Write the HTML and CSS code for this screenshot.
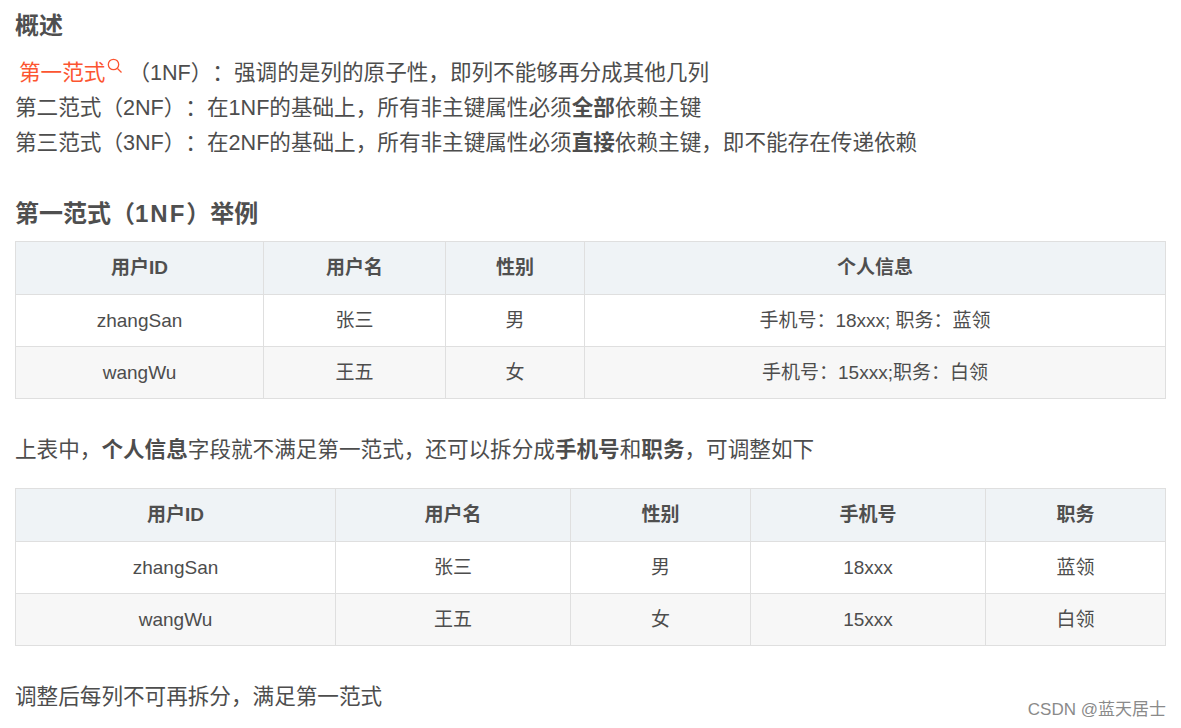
FILE: index.html
```html
<!DOCTYPE html>
<html lang="zh">
<head>
<meta charset="utf-8">
<title>第一范式</title>
<link rel="stylesheet" href="styles.css">
</head>
<body>
<main class="article">
<h3 class="heading first">概述</h3>
<p class="para"><a class="term">第一范式<svg class="search" width="18" height="18" viewBox="0 0 18 18"><circle cx="7.5" cy="6.5" r="5.2" fill="none" stroke="#fc5531" stroke-width="1.3"/><path d="M11.5 10.5l4 4" stroke="#fc5531" stroke-width="1.3" fill="none"/></svg></a><span class="after-term">（1NF）：</span>强调的是列的原子性，即列不能够再分成其他几列<br>第二范式（2NF）：在1NF的基础上，所有非主键属性必须<strong>全部</strong>依赖主键<br>第三范式（3NF）：在2NF的基础上，所有非主键属性必须<strong>直接</strong>依赖主键，即不能存在传递依赖</p>
<h3 class="heading">第一范式（<span class="wide">1NF</span>）举例</h3>
<table class="grid one">
<thead><tr><th>用户ID</th><th>用户名</th><th>性别</th><th>个人信息</th></tr></thead>
<tbody>
<tr><td>zhangSan</td><td>张三</td><td>男</td><td>手机号：18xxx; 职务：蓝领</td></tr>
<tr><td>wangWu</td><td>王五</td><td>女</td><td>手机号：15xxx;职务：白领</td></tr>
</tbody>
</table>
<p class="para gap">上表中，<strong>个人信息</strong>字段就不满足第一范式，还可以拆分成<strong>手机号</strong>和<strong>职务</strong>，可调整如下</p>
<table class="grid two">
<thead><tr><th>用户ID</th><th>用户名</th><th>性别</th><th>手机号</th><th>职务</th></tr></thead>
<tbody>
<tr><td>zhangSan</td><td>张三</td><td>男</td><td>18xxx</td><td>蓝领</td></tr>
<tr><td>wangWu</td><td>王五</td><td>女</td><td>15xxx</td><td>白领</td></tr>
</tbody>
</table>
<p class="para gap">调整后每列不可再拆分，满足第一范式</p>
</main>
<div class="mark">CSDN @蓝天居士</div>
</body>
</html>
```
FILE: styles.css
```css
html, body { margin: 0; padding: 0; background: #fff; height: 728px; overflow: hidden; }
body { font-family: "Liberation Sans", "Noto Sans CJK SC", sans-serif; color: #4d4d4d; position: relative; text-spacing-trim: space-all; }
.article { padding: 0 15px; }
.heading { margin: 0; font-size: 24px; line-height: 30px; font-weight: 700; color: #4f4f4f; padding-top: 39px; padding-bottom: 12px; }
.heading.first { padding-top: 11px; padding-bottom: 14px; }
.wide { letter-spacing: 2px; }
.para { margin: 0; font-size: 21.6px; line-height: 35px; color: #4d4d4d; }
.para strong { font-weight: 700; }
.term { color: #fc5531; padding-left: 4px; }
.search { vertical-align: 4px; margin-left: 1px; }
.after-term { margin-left: 4px; }
.gap { margin-top: 33px; }
.grid { border-collapse: collapse; width: 1151px; table-layout: fixed; font-size: 19px; line-height: 24px; }
.grid th, .grid td { border: 1px solid #dfdfdf; text-align: center; height: 52px; padding: 0; box-sizing: border-box; }
.grid th { background: #eff3f6; font-weight: 700; color: #4f4f4f; height: 53px; }
.grid tbody tr:nth-child(2) td { background: #f7f7f7; }
.two { margin-top: 21px; }
.mark { position: absolute; right: 15px; top: 699px; font-size: 17px; line-height: 22px; color: #8a8a8a; }
.one th:nth-child(1) { width: 248px; }
.one th:nth-child(2) { width: 182px; }
.one th:nth-child(3) { width: 139px; }
.two th:nth-child(1) { width: 320px; }
.two th:nth-child(2) { width: 235px; }
.two th:nth-child(3) { width: 180px; }
.two th:nth-child(4) { width: 235px; }
```
